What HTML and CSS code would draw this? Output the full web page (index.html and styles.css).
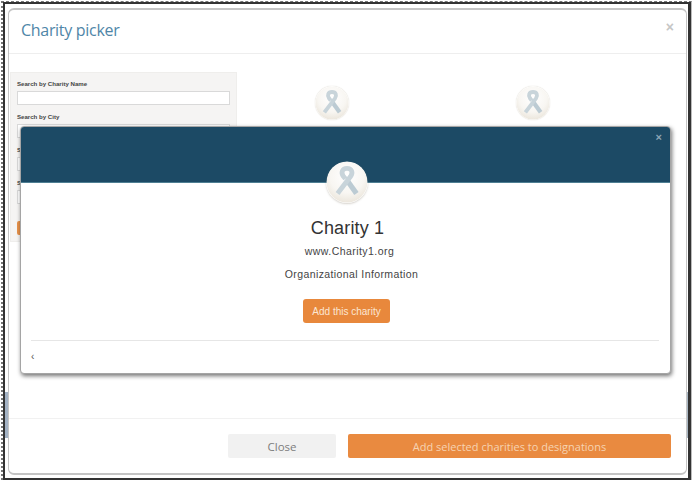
FILE: index.html
```html
<!DOCTYPE html>
<html lang="en">
<head>
<meta charset="utf-8">
<title>Charity picker</title>
<link rel="stylesheet" href="styles.css">
</head>
<body>
<svg class="defs" width="0" height="0" aria-hidden="true">
  <defs>
    <radialGradient id="disc" cx="50%" cy="35%" r="70%">
      <stop offset="0%" stop-color="#ffffff"/>
      <stop offset="60%" stop-color="#f8f6f2"/>
      <stop offset="100%" stop-color="#e9e3d8"/>
    </radialGradient>
    <symbol id="ribbon" viewBox="0 0 40 40">
      <circle cx="20" cy="20" r="19.5" fill="url(#disc)"/>
      <path d="M20.5 19L29 31" fill="none" stroke="#bccbd3" stroke-width="5"/>
      <path d="M11 31L23.5 14.5C26 11 24.5 7 20 7C15.5 7 14 11 16.5 14.5L18.5 17" fill="none" stroke="#c8d4da" stroke-width="4.6"/>
    </symbol>
  </defs>
</svg>
<div class="frame">
  <span class="sliver sliver-left"></span>
  <span class="sliver sliver-right"></span>
  <div class="modal">
    <header class="modal-head">
      <h1 class="modal-title">Charity picker</h1>
      <span class="modal-x">×</span>
    </header>
    <main class="modal-body">
      <form class="search">
        <label class="field-label">Search by Charity Name</label>
        <input class="field" type="text">
        <label class="field-label">Search by City</label>
        <input class="field" type="text">
        <label class="field-label">Search by State</label>
        <input class="field" type="text">
        <label class="field-label">Search by Zip</label>
        <input class="field" type="text">
        <span class="search-btn"></span>
      </form>
      <div class="results">
        <svg class="thumb"><use href="#ribbon"/></svg>
        <svg class="thumb"><use href="#ribbon"/></svg>
      </div>
    </main>
    <footer class="modal-foot">
      <button class="btn btn-close" type="button">Close</button>
      <button class="btn btn-add" type="button">Add selected charities to designations</button>
    </footer>
    <section class="detail">
      <div class="detail-banner"><span class="detail-x">×</span></div>
      <svg class="avatar"><use href="#ribbon"/></svg>
      <h2 class="detail-name">Charity 1</h2>
      <p class="detail-url">www.Charity1.org</p>
      <p class="detail-org">Organizational Information</p>
      <button class="detail-add" type="button">Add this charity</button>
      <hr class="detail-rule">
      <span class="detail-back">‹</span>
    </section>
  </div>
</div>
</body>
</html>
```
FILE: styles.css
```css
* { box-sizing: border-box; }
html, body { margin: 0; height: 100%; background: #fff; }
body { padding: 1px; overflow: hidden; }
.defs { position: absolute; }

.frame {
  position: relative;
  width: 691px;
  height: 479px;
  padding: 6px 2px 2px 5px;
  border-top: 1px dashed #777;
  border-left: 2px dotted #777;
  border-right: 1px solid #bbb;
  background: #fff;
  box-shadow: inset 2px 2px 0 #333, inset -3px -2px 0 #333;
}
.sliver { position: absolute; width: 4px; }
.sliver-left { left: 2px; top: 390px; height: 46px; background: #a3b2c4; }
.sliver-right { right: 3px; top: 390px; height: 46px; background: #a9b7c4; }

.modal {
  position: relative;
  display: flex;
  flex-direction: column;
  width: 679px;
  height: 467px;
  background: #fff;
  border: 1px solid #c4c4c4;
  border-top-width: 2px;
  border-bottom-width: 2px;
  border-radius: 6px;
}

.modal-head {
  display: flex;
  justify-content: space-between;
  align-items: center;
  height: 44px;
  padding: 0 12px 4px 12px;
  border-bottom: 1px solid #eee;
}
.modal-title {
  margin: 0;
  font: 400 16px "Open Sans", sans-serif;
  letter-spacing: -.3px;
  color: #4f86a8;
}
.modal-x {
  margin-bottom: 6px;
  font: 700 14px "Liberation Sans", sans-serif;
  color: #c6c6c6;
}

.modal-body { flex: 1; display: flex; padding: 18px 0 0 1px; min-height: 0; }
.search {
  display: flex;
  flex-direction: column;
  width: 227px;
  height: 170px;
  padding: 5px 6px 0 6px;
  background: #f5f4f3;
  border: 1px solid #efeeec;
}
.field-label {
  height: 11px;
  font: 700 6.1px/11px "Liberation Sans", sans-serif;
  color: #444;
}
.field {
  display: block;
  width: 100%;
  height: 14px;
  margin: 2px 0 6px;
  padding: 0;
  background: #fff;
  border: 1px solid #d9d9d9;
}
.search-btn {
  display: block;
  width: 40px;
  height: 14px;
  margin-top: 11px;
  background: #e8924b;
  border-radius: 2px;
}
.results { display: flex; gap: 167px; padding: 14px 0 0 78px; }
.thumb { width: 34px; height: 34px; border-radius: 50%; box-shadow: 0 0 1px #cfc9bd; }

.modal-foot {
  display: flex;
  justify-content: flex-end;
  gap: 12px;
  height: 55px;
  padding: 15px 15px 0 0;
  border-top: 1px solid #f1f1f1;
}
.btn {
  height: 24px;
  padding: 0;
  border: 0;
  border-radius: 2px;
  font-family: "Open Sans", sans-serif;
  font-weight: 400;
}
.btn-close { width: 108px; background: #f1f1f1; color: #7d7d7d; font-size: 11.5px; }
.btn-add { width: 323px; background: #e98a40; color: #f6d3b2; font-size: 11px; }

.detail {
  position: absolute;
  left: 11px;
  top: 116px;
  display: flex;
  flex-direction: column;
  align-items: center;
  width: 651px;
  height: 248px;
  background: #fff;
  border: 1px solid #a5a5a5;
  border-radius: 4px;
  box-shadow: 1px 2px 4px rgba(0, 0, 0, .55);
}
.detail-banner {
  display: flex;
  justify-content: flex-end;
  align-self: stretch;
  flex: none;
  height: 56px;
  padding: 4px 8px;
  background: #1c4a65;
  border-bottom: 1px solid #4f7f93;
  border-radius: 3px 3px 0 0;
}
.detail-x { font: 700 11px "Liberation Sans", sans-serif; color: #8da6b5; }
.avatar {
  flex: none;
  width: 42px;
  height: 42px;
  margin: -22px 0 0 2px;
  border-radius: 50%;
  box-shadow: 0 1px 2px rgba(120, 110, 90, .3);
}
.detail-name {
  margin: 15px 0 0 4px;
  font: 400 18px/21px "Liberation Sans", sans-serif;
  color: #333;
  letter-spacing: .15px;
}
.detail-url, .detail-org {
  margin: 0;
  font: 400 10.5px/14px "Liberation Sans", sans-serif;
  color: #444;
}
.detail-url { margin: 5px 0 0 8px; letter-spacing: .45px; }
.detail-org { margin: 9px 0 0 12px; letter-spacing: .4px; }
.detail-add {
  width: 87px;
  height: 24px;
  margin: 18px 0 0 2px;
  padding: 0;
  border: 0;
  border-radius: 3px;
  background: #e8883c;
  color: #fbe6d3;
  font: 400 10px "Liberation Sans", sans-serif;
}
.detail-rule {
  align-self: stretch;
  margin: 17px 11px 0 10px;
  border: 0;
  border-top: 1px solid #e6e6e6;
}
.detail-back {
  align-self: flex-start;
  margin: 9px 0 0 10px;
  font: 400 10px/14px "Liberation Sans", sans-serif;
  color: #555;
}
```
